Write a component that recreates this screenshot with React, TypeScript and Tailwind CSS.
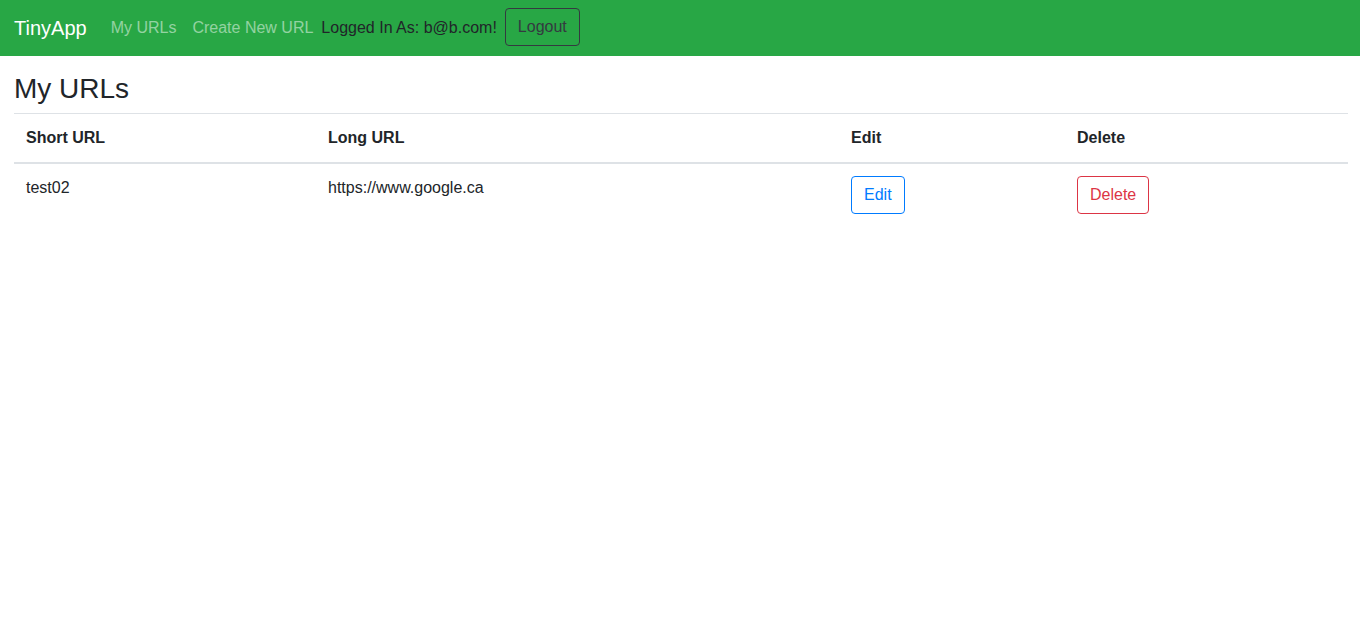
const font = { fontFamily: '"Liberation Sans", Arial, sans-serif' };

type UrlRow = { short: string; long: string };

const urls: UrlRow[] = [{ short: "test02", long: "https://www.google.ca" }];

const Navbar = () => {
  return (
    <nav className="flex h-14 items-center bg-[#28a745] px-[14px]">
      <a className="mr-4 py-[5px] text-[20px] leading-[30px] text-white">TinyApp</a>
      <div className="flex items-center">
        <a className="px-2 py-2 text-base leading-6 text-white/50">My URLs</a>
        <a className="px-2 py-2 text-base leading-6 text-white/50">Create New URL</a>
      </div>
      <span className="text-base leading-6 text-[#212529]">Logged In As: b@b.com!</span>
      <button className="mb-[2px] ml-2 rounded border border-[#343a40] px-3 py-[6px] text-base leading-6 text-[#343a40]">
        Logout
      </button>
    </nav>
  );
};

const App = () => {
  return (
    <div className="min-h-screen bg-white text-[#212529]" style={font}>
      <Navbar />
      <main className="pl-[14px] pr-3 pt-4">
        <h3 className="mb-[7px] text-[28px] font-normal leading-[34px] text-[#212529]">My URLs</h3>
        <table className="w-full table-fixed border-collapse text-base leading-6">
          <thead>
            <tr>
              <th className="w-[302px] border-t border-b-2 border-t-[#dee2e6] border-b-[#dee2e6] p-3 text-left font-bold">
                Short URL
              </th>
              <th className="w-[523px] border-t border-b-2 border-t-[#dee2e6] border-b-[#dee2e6] p-3 text-left font-bold">
                Long URL
              </th>
              <th className="w-[226px] border-t border-b-2 border-t-[#dee2e6] border-b-[#dee2e6] p-3 text-left font-bold">
                Edit
              </th>
              <th className="border-t border-b-2 border-t-[#dee2e6] border-b-[#dee2e6] p-3 text-left font-bold">
                Delete
              </th>
            </tr>
          </thead>
          <tbody>
            {urls.map((u) => (
              <tr key={u.short}>
                <td className="p-3 align-top">{u.short}</td>
                <td className="p-3 align-top">{u.long}</td>
                <td className="p-3 align-top">
                  <button className="rounded border border-[#007bff] px-3 py-[6px] text-base leading-6 text-[#007bff]">
                    Edit
                  </button>
                </td>
                <td className="p-3 align-top">
                  <button className="rounded border border-[#dc3545] px-3 py-[6px] text-base leading-6 text-[#dc3545]">
                    Delete
                  </button>
                </td>
              </tr>
            ))}
          </tbody>
        </table>
      </main>
    </div>
  );
};

export default App;
